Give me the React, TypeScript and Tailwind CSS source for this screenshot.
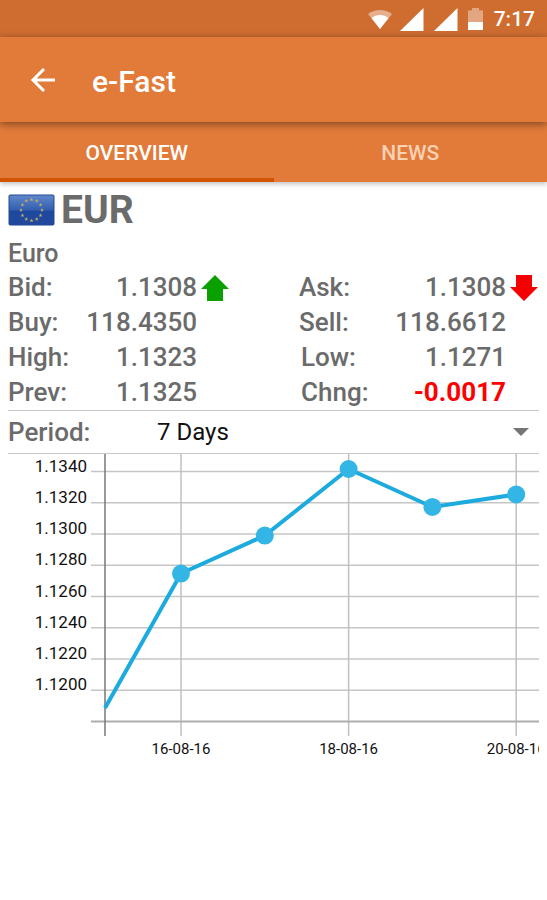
import React, { useState } from 'react'

const quotes = [
  { left: 'Bid:', leftValue: '1.1308', leftTrend: 'up', right: 'Ask:', rightValue: '1.1308', rightTrend: 'down' },
  { left: 'Buy:', leftValue: '118.4350', right: 'Sell:', rightValue: '118.6612' },
  { left: 'High:', leftValue: '1.1323', right: 'Low:', rightValue: '1.1271', indent: true },
  { left: 'Prev:', leftValue: '1.1325', right: 'Chng:', rightValue: '-0.0017', indent: true, negative: true },
]

const rates = [1.11886, 1.12747, 1.1299, 1.13416, 1.13173, 1.13253]
const levels = ['1.1340', '1.1320', '1.1300', '1.1280', '1.1260', '1.1240', '1.1220', '1.1200']
const days = [
  { label: '16-08-16', index: 1 },
  { label: '18-08-16', index: 3 },
  { label: '20-08-16', index: 5 },
]

const chartX = (i: number) => (i === 0 ? 97 : 173 + (i - 1) * 83.8)
const chartY = (rate: number) => 17.5 + ((1.134 - rate) / 0.002) * 31.25

const StatusBar = () => (
  <div className="flex h-[37px] items-center justify-end bg-[#cf6d30] pr-3 pt-0.5 text-white">
    <svg className="mr-2 h-6 w-6" viewBox="0 0 24 24" fill="currentColor">
      <path d="M0 6C7 0.5 17 0.5 24 6L12 21Z" opacity="0.45" />
      <path d="M3.5 10C8.5 6 15.5 6 20.5 10L12 21Z" />
    </svg>
    <svg className="mr-2.5 h-6 w-6" viewBox="0 0 24 24" fill="currentColor">
      <path d="M23.5 0V23H0Z" />
    </svg>
    <svg className="mr-2.5 h-6 w-6" viewBox="0 0 24 24" fill="currentColor">
      <path d="M23.5 0V23H0Z" />
    </svg>
    <svg className="mr-2.5 h-6 w-4" viewBox="0 0 16 24" fill="currentColor">
      <path d="M4 0H11V2.5H15V14H0V2.5H4Z" opacity="0.4" />
      <path d="M0 14H15V22H0Z" />
    </svg>
    <span className="text-[21px] font-medium">7:17</span>
  </div>
)

const EuFlag = () => (
  <svg className="h-8 w-[47px]" viewBox="0 0 47 32" role="img" aria-label="European Union">
    <defs>
      <linearGradient id="flag" x1="0" y1="0" x2="0" y2="1">
        <stop offset="0" stopColor="#6389cb" />
        <stop offset="0.48" stopColor="#3560b0" />
        <stop offset="0.55" stopColor="#1d489f" />
        <stop offset="1" stopColor="#22489c" />
      </linearGradient>
    </defs>
    <rect x="1" y="1" width="45" height="30" rx="1" fill="url(#flag)" stroke="#234a94" />
    {Array.from({ length: 12 }, (_, i) => {
      const angle = (i * Math.PI) / 6
      return (
        <path
          key={i}
          d="M0 -2L0.6 -0.6L2 -0.6L0.9 0.3L1.3 1.7L0 0.9L-1.3 1.7L-0.9 0.3L-2 -0.6L-0.6 -0.6Z"
          fill="#b3a96c"
          transform={`translate(${23.5 + 10.5 * Math.sin(angle)} ${16 - 10.5 * Math.cos(angle)})`}
        />
      )
    })}
  </svg>
)

const Trend = ({ direction }: { direction?: string }) => {
  if (!direction) return null
  return direction === 'up' ? (
    <svg className="ml-1 h-7 w-7" viewBox="0 0 28 28" role="img" aria-label="Up">
      <path d="M14 1L28 15H22V27H6V15H0Z" fill="#0aa000" />
    </svg>
  ) : (
    <svg className="ml-1 h-7 w-7" viewBox="0 0 28 28" role="img" aria-label="Down">
      <path d="M6 1H22V13H28L14 27L0 13H6Z" fill="#f40000" />
    </svg>
  )
}

const RateChart = () => (
  <svg className="block h-auto w-full" viewBox="0 0 531 310" role="img" aria-label="EUR rate history">
    {levels.map((level) => {
      const y = chartY(Number(level))
      return (
        <g key={level}>
          <line x1="83" x2="531" y1={y} y2={y} stroke="#c6c6c6" strokeWidth="1.5" />
          <text x="79" y={y} textAnchor="end" fontSize="17" fill="#111">{level}</text>
        </g>
      )
    })}
    {days.map((day) => (
      <g key={day.label}>
        <line x1={chartX(day.index)} x2={chartX(day.index)} y1="0" y2="282" stroke="#c0c0c0" strokeWidth="1.5" />
        <text x={chartX(day.index)} y="300" textAnchor="middle" fontSize="15" fill="#111">{day.label}</text>
      </g>
    ))}
    <line x1="83" x2="531" y1="267.5" y2="267.5" stroke="#adadad" strokeWidth="2" />
    <line x1="97" x2="97" y1="0" y2="282" stroke="#777" strokeWidth="1.5" />
    <polyline
      points={rates.map((rate, i) => `${chartX(i)},${chartY(rate)}`).join(' ')}
      fill="none"
      stroke="#1caadf"
      strokeWidth="4"
    />
    {rates.slice(1).map((rate, i) => (
      <circle key={rate} cx={chartX(i + 1)} cy={chartY(rate)} r="9" fill="#33b5e5" />
    ))}
  </svg>
)

const App: React.FC = () => {
  const [tab, setTab] = useState('Overview')
  const [period, setPeriod] = useState('7 Days')

  return (
    <div className="min-h-screen bg-white font-['Roboto',sans-serif] text-[#6b6b6b]">
      <StatusBar />

      {/* App bar */}
      <header className="relative z-10 flex h-[85px] items-center bg-[#e27b39] px-7 text-white shadow-[0_2px_8px_rgba(0,0,0,0.45)]">
        <button aria-label="Back" className="mr-8">
          <svg className="h-8 w-8" viewBox="0 0 32 32" fill="none" stroke="currentColor" strokeWidth="3">
            <path d="M27 16H5M16 5L5 16L16 27" />
          </svg>
        </button>
        <h1 className="pt-1 text-[30px] font-medium">e-Fast</h1>
      </header>

      {/* Tabs */}
      <nav className="grid h-[60px] grid-cols-2 bg-[#e27b39] text-[21px] font-medium uppercase shadow-[0_2px_5px_rgba(0,0,0,0.25)]">
        {['Overview', 'News'].map((name) => (
          <button
            key={name}
            onClick={() => setTab(name)}
            className={`border-b-4 pt-2 uppercase ${
              tab === name ? 'border-[#d35400] text-white' : 'border-transparent text-[#fad1b4]'
            }`}
          >
            {name}
          </button>
        ))}
      </nav>

      <main className="px-2">
        <div className="flex h-14 items-center gap-1.5">
          <EuFlag />
          <h2 className="text-[39px] font-bold">EUR</h2>
        </div>
        <p className="h-8 text-[25px] font-medium leading-8">Euro</p>

        {/* Quotes */}
        <table className="w-full table-fixed text-[26px] font-medium">
          <colgroup>
            <col className="w-[76px]" />
            <col />
            <col className="w-[102px]" />
            <col className="w-[94px]" />
            <col />
            <col className="w-[33px]" />
          </colgroup>
          <tbody>
            {quotes.map((row) => (
              <tr key={row.left} className="h-[35px] leading-[35px]">
                <th scope="row" className="p-0 text-left font-medium">{row.left}</th>
                <td className="p-0 text-right">{row.leftValue}</td>
                <td className="p-0"><Trend direction={row.leftTrend} /></td>
                <th scope="row" className={`py-0 pr-0 text-left font-medium ${row.indent ? 'pl-0.5' : 'pl-0'}`}>{row.right}</th>
                <td className={`p-0 text-right ${row.negative ? 'font-bold text-[#ff0000]' : ''}`}>{row.rightValue}</td>
                <td className="p-0"><Trend direction={row.rightTrend} /></td>
              </tr>
            ))}
          </tbody>
        </table>

        {/* Period */}
        <div className="flex h-11 items-center border-y border-[#c8c8c8]">
          <label htmlFor="period" className="w-[149px] text-[26px] font-medium">Period:</label>
          <div className="relative flex-1">
            <select
              id="period"
              value={period}
              onChange={(e) => setPeriod(e.target.value)}
              className="w-full appearance-none bg-transparent text-2xl text-[#111]"
            >
              <option>7 Days</option>
              <option>30 Days</option>
              <option>90 Days</option>
            </select>
            <svg className="pointer-events-none absolute right-2.5 top-1/2 h-2 w-4 -translate-y-1/2" viewBox="0 0 16 8">
              <path d="M0 0H16L8 8Z" fill="#757575" />
            </svg>
          </div>
        </div>

        <RateChart />
      </main>
    </div>
  )
}

export default App
